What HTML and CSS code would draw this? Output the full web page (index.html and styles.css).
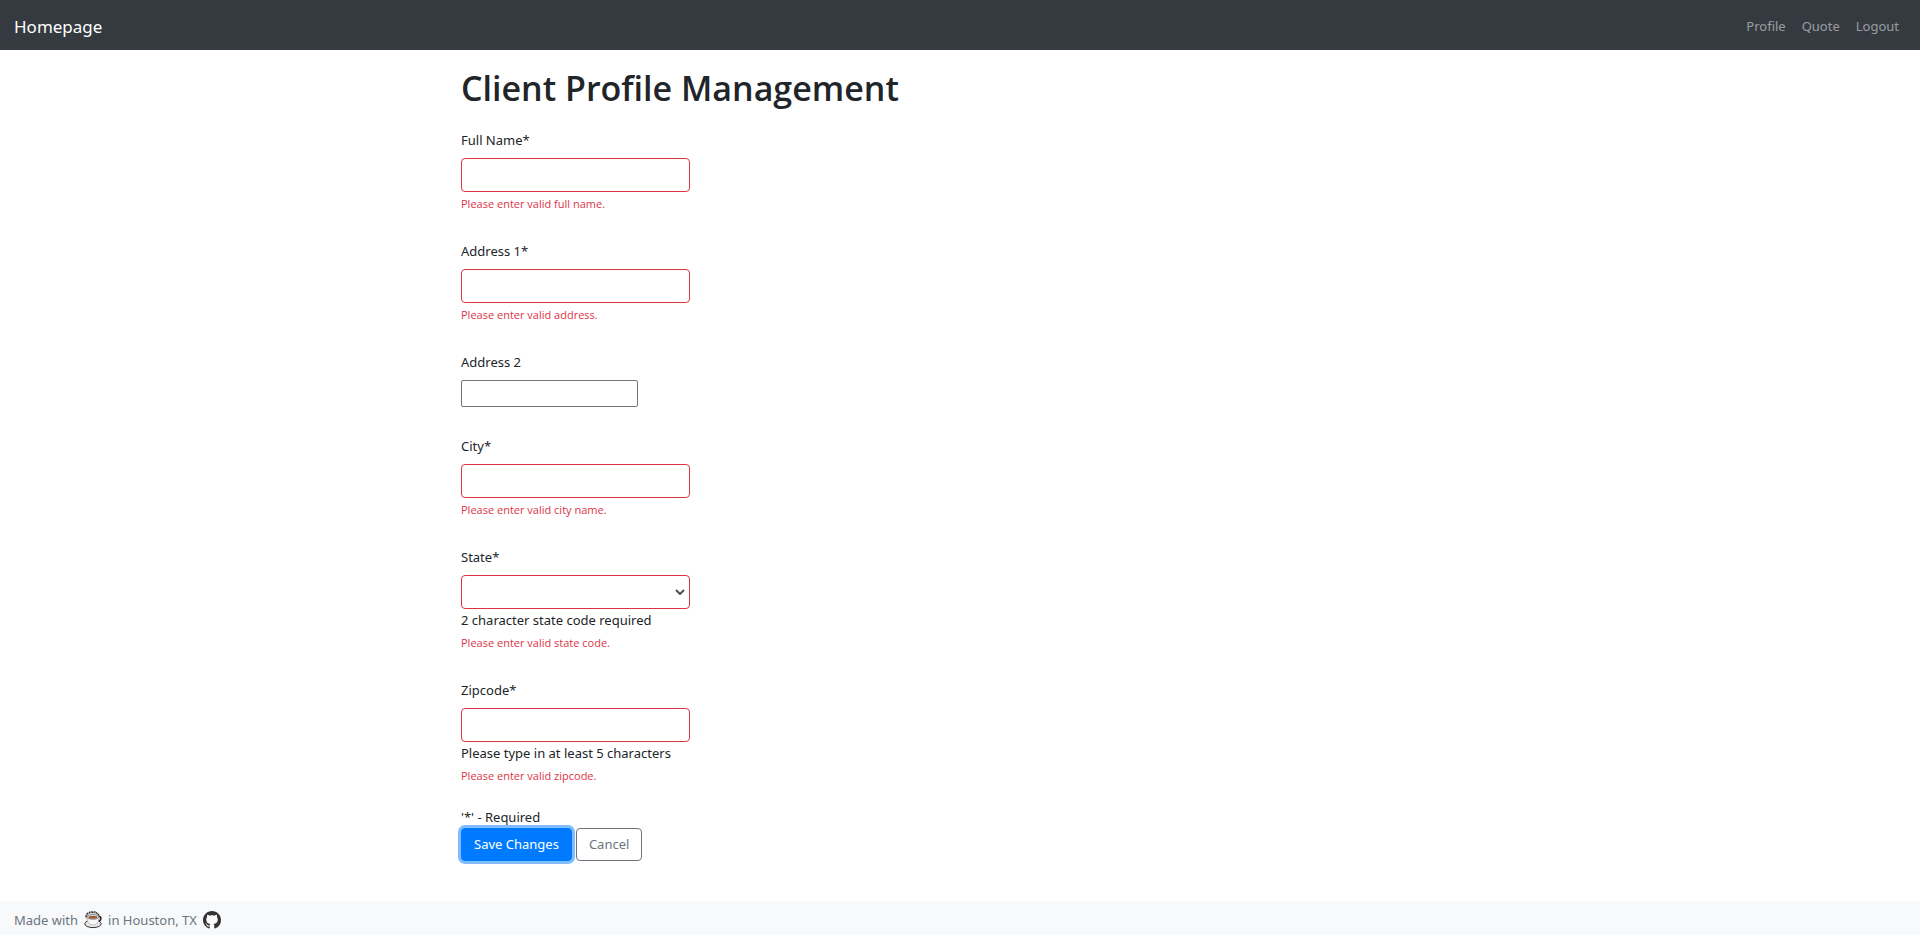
FILE: index.html
```html
<!DOCTYPE html>
<html lang="en">
<head>
<meta charset="utf-8">
<title>Client Profile Management</title>
<link rel="stylesheet" href="styles.css">
</head>
<body>
<nav class="navbar">
  <a class="brand" href="#">Homepage</a>
  <div class="nav-links">
    <a href="#">Profile</a>
    <a href="#">Quote</a>
    <a href="#">Logout</a>
  </div>
</nav>
<main class="container">
  <h1>Client Profile Management</h1>
  <form novalidate>
    <div class="field">
      <label for="name">Full Name*</label>
      <input class="control" id="name" type="text">
      <p class="error">Please enter valid full name.</p>
    </div>
    <div class="field">
      <label for="address1">Address 1*</label>
      <input class="control" id="address1" type="text">
      <p class="error">Please enter valid address.</p>
    </div>
    <div class="field">
      <label for="address2">Address 2</label>
      <input class="plain" id="address2" type="text">
    </div>
    <div class="field">
      <label for="city">City*</label>
      <input class="control" id="city" type="text">
      <p class="error">Please enter valid city name.</p>
    </div>
    <div class="field">
      <label for="state">State*</label>
      <div class="select">
        <select class="control" id="state"><option></option><option>TX</option></select>
        <svg class="chevron" width="10" height="6" viewBox="0 0 10 6" aria-hidden="true"><path d="M1 1l4 4 4-4" fill="none" stroke="#495057" stroke-width="2"/></svg>
      </div>
      <p class="hint">2 character state code required</p>
      <p class="error">Please enter valid state code.</p>
    </div>
    <div class="field field-last">
      <label for="zip">Zipcode*</label>
      <input class="control" id="zip" type="text">
      <p class="hint">Please type in at least 5 characters</p>
      <p class="error">Please enter valid zipcode.</p>
    </div>
    <p>'*' - Required</p>
    <div class="actions">
      <button class="btn btn-primary" type="submit">Save Changes</button>
      <button class="btn btn-outline" type="button">Cancel</button>
    </div>
  </form>
</main>
<footer class="footer">
  <span>Made with</span>
  <svg width="18" height="18" viewBox="0 0 18 18" role="img" aria-label="coffee">
    <path d="M2 6c0-2 1-4 3-4 1-1.500 3-1.500 4-.5 1-1 3-.5 3.500.5 1.500 0 2.500 1.500 2.500 3.500z" fill="#ccc" stroke="#222" stroke-width="1.200" stroke-dasharray="2 .6"/>
    <path d="M14.500 5.500c3.300-.6 3.300 4-.5 5" fill="none" stroke="#222" stroke-width="1.500"/>
    <ellipse cx="9" cy="12.800" rx="8.200" ry="3.800" fill="#e9e9e9" stroke="#333" stroke-width="1"/>
    <path d="M2.800 6c0 4.500 2 8 6.200 8s6-3.500 6-8z" fill="#f6f6f6" stroke="#888" stroke-width=".5"/>
    <ellipse cx="8.900" cy="6" rx="6.100" ry="2.300" fill="#eee" stroke="#555" stroke-width=".6"/>
    <ellipse cx="8.900" cy="6.200" rx="4.600" ry="1.500" fill="#9c5a3a"/>
  </svg>
  <span>in Houston, TX</span>
  <a class="github" href="#" aria-label="GitHub">
    <svg width="18" height="18" viewBox="0 0 16 16" aria-hidden="true"><path fill="#333" d="M8 0C3.580 0 0 3.580 0 8c0 3.540 2.290 6.530 5.470 7.590.4.070.55-.17.55-.38 0-.19-.01-.82-.01-1.490-2.010.37-2.530-.49-2.690-.94-.09-.23-.48-.94-.82-1.130-.28-.15-.68-.52-.01-.53.63-.01 1.080.58 1.230.82.72 1.210 1.870.87 2.330.66.07-.52.28-.87.51-1.070-1.780-.2-3.640-.89-3.640-3.950 0-.87.31-1.590.82-2.150-.08-.2-.36-1.020.08-2.120 0 0 .67-.21 2.200.82.64-.18 1.320-.27 2-.27s1.360.09 2 .27c1.530-1.040 2.200-.82 2.200-.82.44 1.100.16 1.920.08 2.120.51.56.82 1.270.82 2.150 0 3.070-1.870 3.750-3.650 3.950.29.25.54.73.54 1.480 0 1.070-.01 1.930-.01 2.200 0 .21.15.46.55.38A8.010 8.010 0 0 0 16 8c0-4.420-3.580-8-8-8z"/></svg>
  </a>
</footer>
</body>
</html>
```
FILE: styles.css
```css
* {
  box-sizing: border-box;
}

body {
  margin: 0;
  min-height: 100vh;
  display: flex;
  flex-direction: column;
  font-family: "Segoe UI", "Noto Sans", "Open Sans", sans-serif;
  font-size: 13px;
  line-height: 21px;
  color: #212529;
  background: #fff;
}

h1,
p {
  margin: 0;
}

a {
  color: inherit;
  text-decoration: none;
}

.navbar {
  display: flex;
  align-items: center;
  justify-content: space-between;
  height: 50px;
  padding: 2px 21px 0 14px;
  background: #343a40;
}

.brand {
  font-size: 17px;
  color: #fff;
}

.nav-links {
  display: flex;
  gap: 16px;
  color: rgba(255, 255, 255, 0.5);
}

.container {
  flex: 1 0 auto;
  width: 100%;
  max-width: 998px;
  margin: 0 auto;
  padding: 17px 0 40px;
}

h1 {
  margin-bottom: 21px;
  font-family: "Segoe UI", "Open Sans", sans-serif;
  font-size: 34px;
  font-weight: 600;
  line-height: 42px;
}

.field {
  display: flex;
  flex-direction: column;
  align-items: flex-start;
  margin-bottom: 29px;
}

.field-last {
  margin-bottom: 23px;
}

label {
  margin-bottom: 7px;
}

.control {
  display: block;
  width: 229px;
  height: 34px;
  padding: 5px 10px;
  border: 1px solid #dc3545;
  border-radius: 4px;
  background: #fff;
  color: #495057;
  font: inherit;
  appearance: none;
}

.plain {
  width: 177px;
  height: 27px;
  padding: 1px 2px;
  border: 1px solid #767676;
  border-radius: 2px;
  font: inherit;
}

.select {
  position: relative;
}

.chevron {
  position: absolute;
  top: 14px;
  right: 5px;
  pointer-events: none;
}

.hint {
  line-height: 22px;
}

.error {
  margin-top: 3px;
  font-family: "Segoe UI", "Open Sans", sans-serif;
  font-size: 11px;
  line-height: 17px;
  color: #dc3545;
}

.actions {
  display: flex;
  gap: 4px;
}

.btn {
  height: 33px;
  padding: 0 12px;
  border: 1px solid;
  border-radius: 4px;
  font: inherit;
}

.btn-primary {
  border-color: #007bff;
  background: #007bff;
  color: #fff;
  box-shadow: 0 0 0 3px rgba(0, 123, 255, 0.5);
}

.btn-outline {
  border-color: #6c757d;
  background: transparent;
  color: #6c757d;
}

.footer {
  display: flex;
  align-items: center;
  gap: 6px;
  height: 36px;
  padding: 2px 14px 0;
  background: #f8f9fa;
  color: #6c757d;
}

.github {
  display: flex;
}
```
